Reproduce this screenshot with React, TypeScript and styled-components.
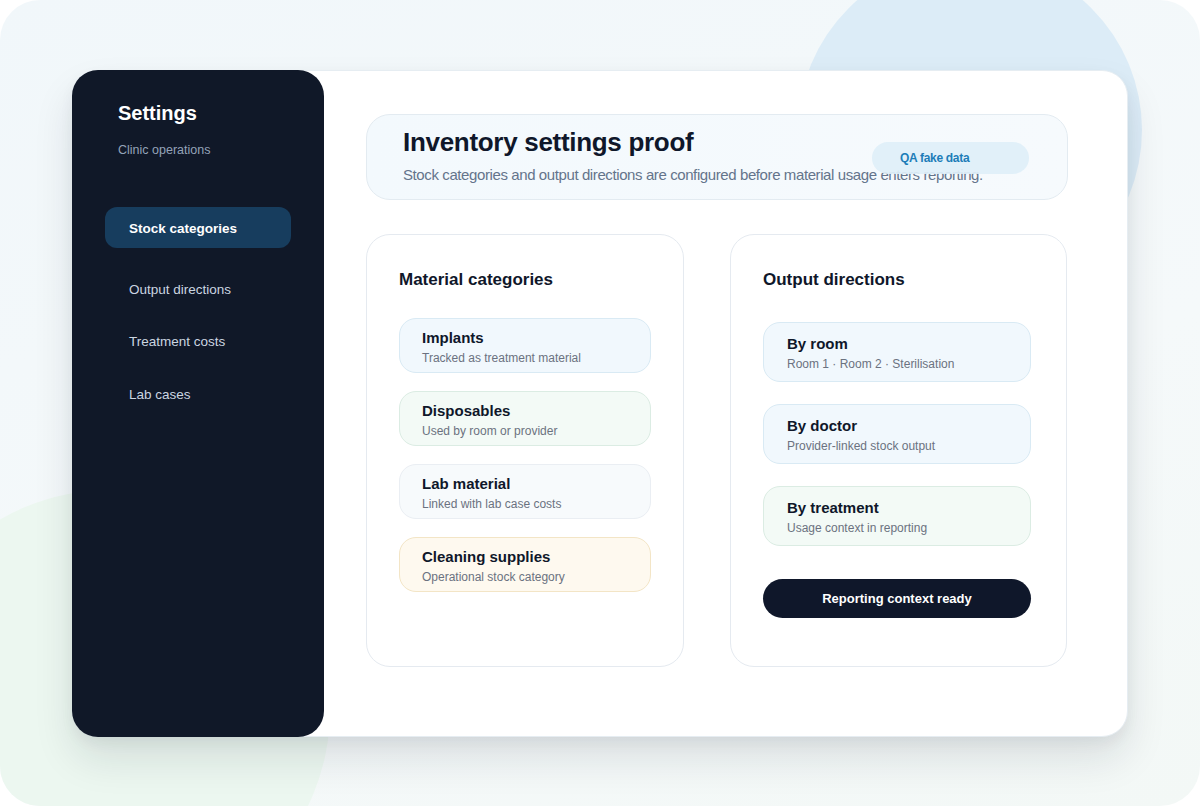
import React from 'react';
import styled, { createGlobalStyle } from 'styled-components';

const GlobalStyle = createGlobalStyle`
  html, body {
    margin: 0;
    padding: 0;
    background: #ffffff;
  }
  body {
    font-family: "Liberation Sans", Arial, sans-serif;
    color: #0f172a;
  }
`;

const Frame = styled.div`
  position: relative;
  width: 1200px;
  height: 806px;
  border-radius: 40px;
  overflow: hidden;
  background: linear-gradient(160deg, #f1f7fa 0%, #f5f9fa 60%, #f3f8f6 100%);
  padding: 70px 72px 69px;
  box-sizing: border-box;
`;

const Blob = styled.div<{ $size: number; $x: number; $y: number; $tint: string }>`
  position: absolute;
  left: ${({ $x }) => $x}px;
  top: ${({ $y }) => $y}px;
  width: ${({ $size }) => $size}px;
  height: ${({ $size }) => $size}px;
  border-radius: 50%;
  background: ${({ $tint }) => $tint};
  z-index: 0;
`;

const Window = styled.div`
  position: relative;
  z-index: 1;
  display: flex;
  height: 667px;
  background: #ffffff;
  border-radius: 26px;
  border: 1px solid #e6edf2;
  box-sizing: border-box;
  box-shadow: 0 22px 40px rgba(15, 23, 42, 0.11), 0 6px 14px rgba(15, 23, 42, 0.05);
`;

const Sidebar = styled.aside`
  width: 252px;
  margin: -1px 0 -1px -1px;
  flex-shrink: 0;
  background: #101828;
  border-radius: 26px;
  padding: 30px 0 0 0;
  box-sizing: border-box;
  display: flex;
  flex-direction: column;
`;

const SideTitle = styled.h2`
  margin: 0 0 0 46px;
  font-size: 20px;
  line-height: 26px;
  font-weight: 700;
  color: #ffffff;
`;

const SideSub = styled.div`
  margin: 15px 0 0 46px;
  font-size: 12.5px;
  line-height: 18px;
  color: #94a3b8;
`;

const Nav = styled.nav`
  margin-top: 48px;
  display: flex;
  flex-direction: column;
`;

const NavItem = styled.div<{ $active?: boolean }>`
  display: flex;
  align-items: center;
  font-size: 13.5px;
  ${({ $active }) =>
    $active
      ? `
    margin: 0 33px 15px 33px;
    height: 41px;
    padding: 1px 0 0 24px;
    box-sizing: border-box;
    border-radius: 12px;
    background: #173d5e;
    color: #ffffff;
    font-weight: 700;
  `
      : `
    height: 52.5px;
    padding-left: 57px;
    color: #cbd5e1;
  `}
`;

const Main = styled.main`
  flex: 1;
  padding: 43px 59px 0 42px;
  display: flex;
  flex-direction: column;
  gap: 34px;
`;

const Header = styled.header`
  position: relative;
  height: 86px;
  box-sizing: border-box;
  padding: 11px 36px 0;
  border-radius: 24px;
  border: 1px solid #e3ebf1;
  background: linear-gradient(90deg, #f3f9fd 0%, #f6fafd 100%);
`;

const PageTitle = styled.h1`
  margin: 0;
  font-size: 26px;
  line-height: 32px;
  letter-spacing: -0.3px;
  font-weight: 700;
  color: #0f172a;
`;

const PageSub = styled.p`
  margin: 7px 0 0;
  font-size: 15px;
  line-height: 20px;
  letter-spacing: -0.4px;
  white-space: nowrap;
  color: #64748b;
`;

const Badge = styled.span`
  position: absolute;
  left: 505px;
  top: 27px;
  width: 157px;
  height: 32px;
  box-sizing: border-box;
  padding-left: 28px;
  display: flex;
  align-items: center;
  border-radius: 16px;
  background: rgba(222, 239, 249, 0.92);
  font-size: 12px;
  letter-spacing: -0.3px;
  font-weight: 700;
  color: #1d7db8;
`;

const Columns = styled.div`
  display: grid;
  grid-template-columns: 318px 337px;
  gap: 46px;
`;

const Card = styled.section<{ $pr: number }>`
  height: 433px;
  box-sizing: border-box;
  padding: 34px ${({ $pr }) => $pr}px 0 32px;
  border-radius: 24px;
  border: 1px solid #e5eaf0;
  background: #ffffff;
  display: flex;
  flex-direction: column;
`;

const CardTitle = styled.h3<{ $gap: number }>`
  margin: 0 0 ${({ $gap }) => $gap}px;
  font-size: 17px;
  line-height: 22px;
  font-weight: 700;
  color: #0f172a;
`;

const List = styled.div<{ $gap: number }>`
  display: flex;
  flex-direction: column;
  gap: ${({ $gap }) => $gap}px;
`;

const Tile = styled.div<{ $bg: string; $line: string; $h: number; $pt: number }>`
  height: ${({ $h }) => $h}px;
  box-sizing: border-box;
  padding: ${({ $pt }) => $pt}px 0 0 ${({ $h }) => ($h > 56 ? 23 : 22)}px;
  border-radius: 17px;
  background: ${({ $bg }) => $bg};
  border: 1px solid ${({ $line }) => $line};
`;

const TileTitle = styled.div`
  font-size: 15px;
  line-height: 20px;
  font-weight: 700;
  color: #0f172a;
`;

const TileSub = styled.div`
  margin-top: 2px;
  font-size: 12px;
  line-height: 16px;
  color: #6b7280;
`;

const ReadyButton = styled.button`
  margin-top: 33px;
  height: 39px;
  border: none;
  border-radius: 20px;
  background: #0f172a;
  color: #ffffff;
  font-family: "Liberation Sans", Arial, sans-serif;
  font-size: 13px;
  font-weight: 700;
`;

const tones = {
  blue: { bg: '#f1f8fd', line: '#d9eaf4' },
  green: { bg: '#f3faf6', line: '#dbece3' },
  gray: { bg: '#f7fafc', line: '#eaeef3' },
  amber: { bg: '#fef9ef', line: '#f3e5c6' },
};

const materials = [
  { title: 'Implants', sub: 'Tracked as treatment material', tone: tones.blue },
  { title: 'Disposables', sub: 'Used by room or provider', tone: tones.green },
  { title: 'Lab material', sub: 'Linked with lab case costs', tone: tones.gray },
  { title: 'Cleaning supplies', sub: 'Operational stock category', tone: tones.amber },
];

const outputs = [
  { title: 'By room', sub: 'Room 1 · Room 2 · Sterilisation', tone: tones.blue },
  { title: 'By doctor', sub: 'Provider-linked stock output', tone: tones.blue },
  { title: 'By treatment', sub: 'Usage context in reporting', tone: tones.green },
];

const navItems = ['Stock categories', 'Output directions', 'Treatment costs', 'Lab cases'];

const App: React.FC = () => {
  return (
    <>
      <GlobalStyle />
      <Frame>
        <Blob $size={344} $x={798} $y={-42} $tint="#dcecf7" />
        <Blob $size={440} $x={-110} $y={490} $tint="#ecf7f0" />
        <Window>
          <Sidebar>
            <SideTitle>Settings</SideTitle>
            <SideSub>Clinic operations</SideSub>
            <Nav>
              {navItems.map((item, i) => (
                <NavItem key={item} $active={i === 0}>
                  {item}
                </NavItem>
              ))}
            </Nav>
          </Sidebar>
          <Main>
            <Header>
              <PageTitle>Inventory settings proof</PageTitle>
              <PageSub>
                Stock categories and output directions are configured before material usage enters reporting.
              </PageSub>
              <Badge>QA fake data</Badge>
            </Header>
            <Columns>
              <Card $pr={32}>
                <CardTitle $gap={27}>Material categories</CardTitle>
                <List $gap={18}>
                  {materials.map((m) => (
                    <Tile key={m.title} $bg={m.tone.bg} $line={m.tone.line} $h={55} $pt={9}>
                      <TileTitle>{m.title}</TileTitle>
                      <TileSub>{m.sub}</TileSub>
                    </Tile>
                  ))}
                </List>
              </Card>
              <Card $pr={35}>
                <CardTitle $gap={31}>Output directions</CardTitle>
                <List $gap={22}>
                  {outputs.map((o) => (
                    <Tile key={o.title} $bg={o.tone.bg} $line={o.tone.line} $h={60} $pt={11}>
                      <TileTitle>{o.title}</TileTitle>
                      <TileSub>{o.sub}</TileSub>
                    </Tile>
                  ))}
                </List>
                <ReadyButton>Reporting context ready</ReadyButton>
              </Card>
            </Columns>
          </Main>
        </Window>
      </Frame>
    </>
  );
};

export default App;
